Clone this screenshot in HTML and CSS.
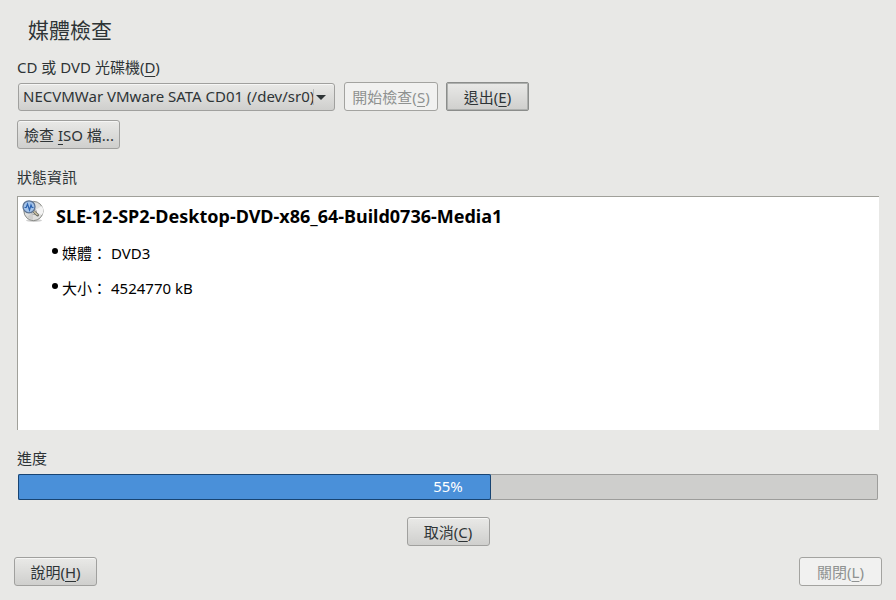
FILE: index.html
```html
<!DOCTYPE html>
<html lang="zh-Hant">
<head>
<meta charset="utf-8">
<title>媒體檢查</title>
<link rel="stylesheet" href="styles.css">
</head>
<body>
<main class="dialog">
  <h1 class="title">媒體檢查</h1>
  <div class="content">
    <label class="label" for="drive">CD 或 DVD 光碟機(<u>D</u>)</label>
    <div class="row">
      <div class="combo">
        <select id="drive" class="combo-select">
          <option>NECVMWar VMware SATA CD01 (/dev/sr0)</option>
        </select>
        <svg class="combo-arrow" viewBox="0 0 16 16" aria-hidden="true"><path class="arrow-line" d="M0.5 0V16"/><path d="M3 6H13L8 11Z"/></svg>
      </div>
      <button class="button start" type="button" disabled>開始檢查(<u>S</u>)</button>
      <button class="button focused" type="button">退出(<u>E</u>)</button>
    </div>
    <button class="button iso" type="button">檢查 <u>I</u>SO 檔...</button>
    <h2 class="label status-label">狀態資訊</h2>
    <section class="status">
      <div class="media">
        <svg class="media-icon" viewBox="0 0 22 22" aria-hidden="true">
          <ellipse cx="12" cy="20.5" rx="8" ry="1.4" fill="#d0d0d0"/>
          <circle cx="11.5" cy="11" r="9.6" fill="#e0e0de" stroke="#858783"/>
          <path d="M12 11L20 6A9 9 0 0 1 20 15Z" fill="#f4f4f4"/>
          <path d="M11 12L5 17A8.500 8.500 0 0 0 11 19.500Z" fill="#cfcfcd"/>
          <circle cx="12" cy="12" r="2.600" fill="#f4f4f2" stroke="#aaa"/>
          <path d="M10.500 10.500L15.500 15" stroke="#666861" stroke-width="3" stroke-linecap="round"/>
          <path d="M11 10.800L15.300 14.700" stroke="#d3c9a9" stroke-width="1.200" stroke-linecap="round"/>
          <circle cx="7" cy="6.800" r="6" fill="#a3c3ea" stroke="#5e7594" stroke-width="1.300"/>
          <path d="M2.500 7.500H4.200L5.500 4L7.500 10L9 5L10 7.500H11.500" fill="none" stroke="#2a62b0" stroke-width="1.200"/>
        </svg>
        <h3 class="media-name">SLE-12-SP2-Desktop-DVD-x86_64-Build0736-Media1</h3>
      </div>
      <ul class="facts">
        <li><span>媒體：</span><span>DVD3</span></li>
        <li><span>大小：</span><span>4524770 kB</span></li>
      </ul>
    </section>
    <label class="label progress-label" for="progress">進度</label>
    <div class="progress">
      <progress id="progress" class="bar" value="55" max="100"></progress>
      <span class="percent">55%</span>
    </div>
    <button class="button cancel" type="button">取消(<u>C</u>)</button>
  </div>
  <footer class="footer">
    <button class="button" type="button">說明(<u>H</u>)</button>
    <button class="button" type="button" disabled>關閉(<u>L</u>)</button>
  </footer>
</main>
</body>
</html>
```
FILE: styles.css
```css
* { box-sizing: border-box; }

body {
  margin: 0;
  background: #e8e8e6;
  color: #2e3436;
  font: 15px/24px "Noto Sans", "Noto Sans CJK TC", sans-serif;
}

u {
  text-decoration-thickness: 1px;
  text-underline-offset: 3px;
  text-decoration-skip-ink: none;
}

.dialog {
  display: flex;
  flex-direction: column;
  min-height: 100vh;
  padding: 15px 14px 14px;
}

.title {
  margin: 0 14px 10px;
  font-size: 21px;
  line-height: 30px;
  font-weight: 400;
}

.content {
  flex: 1;
  display: flex;
  flex-direction: column;
  align-items: flex-start;
  padding: 0 3px;
}

.label {
  margin: 0;
  font-size: 15px;
  line-height: 24px;
  font-weight: 400;
}

.row {
  display: flex;
  margin-top: 3px;
  gap: 8px;
}

.button {
  min-width: 83px;
  height: 29px;
  padding: 0 6px;
  border: 1px solid #a0a09e;
  border-radius: 3px;
  background: linear-gradient(#e9e9e7, #cfcfcd);
  box-shadow: inset 0 1px #f6f6f5;
  color: #2e3436;
  font: inherit;
  line-height: 24px;
  white-space: nowrap;
}

.button:disabled {
  background: #f1f1f0;
  border-color: #a3a3a0;
  color: #8f9291;
  box-shadow: none;
}

.button.focused {
  border-color: #8b8d8b;
  box-shadow: inset 0 0 0 1px #aeb0ae;
  border-radius: 2px;
}

.start {
  width: 94px;
  padding: 0;
}

.combo {
  display: grid;
  width: 317px;
  height: 28px;
  margin: 1px 1px 0;
}

.combo-select {
  grid-area: 1 / 1;
  appearance: none;
  width: 100%;
  padding: 0 20px 2px 4px;
  border: 1px solid #a0a09e;
  border-radius: 3px;
  background: linear-gradient(#e9e9e7, #cfcfcd);
  box-shadow: inset 0 1px #f6f6f5;
  color: #2e3436;
  font: inherit;
}

.combo-arrow {
  grid-area: 1 / 1;
  justify-self: end;
  align-self: center;
  width: 16px;
  height: 16px;
  margin-right: 6px;
  fill: #2e3436;
  pointer-events: none;
}

.arrow-line { stroke: #bdbdbb; }

.iso {
  width: 103px;
  margin-top: 9px;
}

.status-label { margin-top: 16px; }

.status {
  flex: 1;
  align-self: stretch;
  margin: 7px 0 16px;
  padding: 3px 4px;
  border: solid #a0a09a;
  border-width: 1px 0 0 1px;
  background: #fff;
  color: #000;
}

.media {
  display: flex;
  gap: 12px;
}

.media-icon {
  width: 22px;
  height: 22px;
}

.media-name {
  margin: 4px 0 0;
  font-size: 18px;
  line-height: 24px;
  font-weight: 700;
}

.facts {
  display: grid;
  gap: 11px;
  margin: 13px 0 0;
  padding: 0 0 0 40px;
  list-style: none;
}

.facts li {
  display: flex;
  gap: 4px;
}

.facts li::before {
  content: "";
  width: 6px;
  height: 6px;
  margin: 7px 0 0 -10px;
  border-radius: 50%;
  background: #000;
}

.progress {
  display: grid;
  align-self: stretch;
  margin: 4px 1px 0;
}

.bar {
  grid-area: 1 / 1;
  appearance: none;
  width: 100%;
  height: 26px;
  border: 0;
}

.bar::-webkit-progress-bar {
  background: #cececc;
  border-radius: 2px;
  box-shadow: inset 0 0 0 1px #9d9d9b;
}

.bar::-webkit-progress-value {
  background: #4a90d9;
  border-radius: 2px;
  box-shadow: inset 0 0 0 1px #184472;
}

.percent {
  grid-area: 1 / 1;
  place-self: center;
  padding-bottom: 2px;
  color: #fff;
}

.cancel {
  align-self: center;
  margin-top: 17px;
}

.footer {
  display: flex;
  justify-content: space-between;
  margin-top: 11px;
}
```
